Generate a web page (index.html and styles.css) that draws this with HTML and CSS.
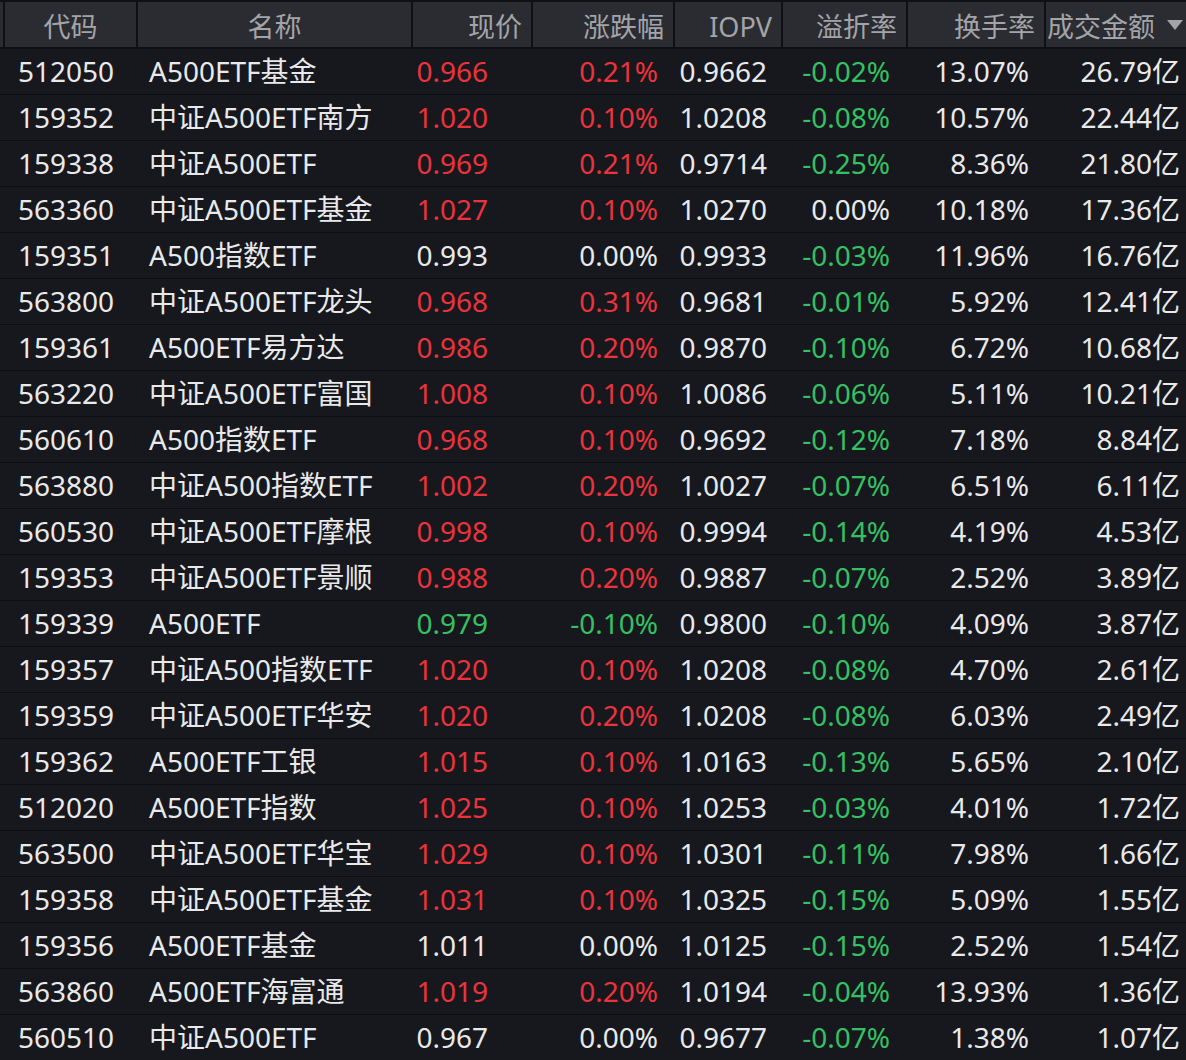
FILE: index.html
```html
<!DOCTYPE html>
<html lang="zh-CN">
<head>
<meta charset="utf-8">
<title>A500 ETF</title>
<link rel="stylesheet" href="styles.css">
</head>
<body>
<div class="board">
  <div class="row head">
    <div class="hc stub"></div>
    <div class="hc center">代码</div>
    <div class="hc center">名称</div>
    <div class="hc right">现价</div>
    <div class="hc right">涨跌幅</div>
    <div class="hc right">IOPV</div>
    <div class="hc right">溢折率</div>
    <div class="hc right">换手率</div>
    <div class="hc sort">成交金额<span class="tri"></span></div>
  </div>
  <div id="rows"></div>
</div>
<script src="app.js"></script>
</body>
</html>
```
FILE: styles.css
```css
* { box-sizing: border-box; }
html, body { margin: 0; padding: 0; background: #16181d; }
body {
  width: 1186px;
  height: 1060px;
  overflow: hidden;
  font-family: "Noto Sans", "Noto Sans CJK SC", sans-serif;
  font-size: 28px;
  color: #e9e9ea;
}
.board { display: flex; flex-direction: column; }
.row {
  display: grid;
  grid-template-columns: 3px 131px 273px 118px 140px 106px 123px 136px 140px;
  column-gap: 2px;
}
.head {
  height: 49px;
  background: #0f1013;
  padding-top: 2px;
  padding-bottom: 2px;
  font-size: 27px;
}
.hc {
  background: #2b2c32;
  color: #a3a4a8;
  display: flex;
  align-items: center;
  white-space: nowrap;
  line-height: 1;
  padding-top: 3px;
}
.hc.center { justify-content: center; }
.hc.right { justify-content: flex-end; padding-right: 9px; }
.hc.sort { padding-left: 1px; }
.tri {
  width: 0; height: 0;
  margin-left: 12px;
  margin-top: -3px;
  border-left: 8px solid transparent;
  border-right: 8px solid transparent;
  border-top: 10px solid #a3a4a8;
}
.data {
  height: 46px;
  padding-bottom: 2px;
  border-bottom: 1px solid #0c0d10;
  align-items: center;
  line-height: 1;
}
.data > div { white-space: nowrap; }
.c-code { padding-left: 13px; }
.c-name { padding-left: 11px; }
.c-price { text-align: right; padding-right: 43px; }
.c-chg { text-align: right; padding-right: 15px; }
.c-iopv { text-align: right; padding-right: 14px; }
.c-prem { text-align: right; padding-right: 16px; }
.c-turn { text-align: right; padding-right: 15px; }
.c-amt { text-align: right; padding-right: 6px; }
.up { color: #ea333c; }
.down { color: #35c063; }
.flat { color: #e9e9ea; }
```
FILE: app.js
```js
var data = [
["512050","A500ETF基金","0.966","0.21%","0.9662","-0.02%","13.07%","26.79亿"],
["159352","中证A500ETF南方","1.020","0.10%","1.0208","-0.08%","10.57%","22.44亿"],
["159338","中证A500ETF","0.969","0.21%","0.9714","-0.25%","8.36%","21.80亿"],
["563360","中证A500ETF基金","1.027","0.10%","1.0270","0.00%","10.18%","17.36亿"],
["159351","A500指数ETF","0.993","0.00%","0.9933","-0.03%","11.96%","16.76亿"],
["563800","中证A500ETF龙头","0.968","0.31%","0.9681","-0.01%","5.92%","12.41亿"],
["159361","A500ETF易方达","0.986","0.20%","0.9870","-0.10%","6.72%","10.68亿"],
["563220","中证A500ETF富国","1.008","0.10%","1.0086","-0.06%","5.11%","10.21亿"],
["560610","A500指数ETF","0.968","0.10%","0.9692","-0.12%","7.18%","8.84亿"],
["563880","中证A500指数ETF","1.002","0.20%","1.0027","-0.07%","6.51%","6.11亿"],
["560530","中证A500ETF摩根","0.998","0.10%","0.9994","-0.14%","4.19%","4.53亿"],
["159353","中证A500ETF景顺","0.988","0.20%","0.9887","-0.07%","2.52%","3.89亿"],
["159339","A500ETF","0.979","-0.10%","0.9800","-0.10%","4.09%","3.87亿"],
["159357","中证A500指数ETF","1.020","0.10%","1.0208","-0.08%","4.70%","2.61亿"],
["159359","中证A500ETF华安","1.020","0.20%","1.0208","-0.08%","6.03%","2.49亿"],
["159362","A500ETF工银","1.015","0.10%","1.0163","-0.13%","5.65%","2.10亿"],
["512020","A500ETF指数","1.025","0.10%","1.0253","-0.03%","4.01%","1.72亿"],
["563500","中证A500ETF华宝","1.029","0.10%","1.0301","-0.11%","7.98%","1.66亿"],
["159358","中证A500ETF基金","1.031","0.10%","1.0325","-0.15%","5.09%","1.55亿"],
["159356","A500ETF基金","1.011","0.00%","1.0125","-0.15%","2.52%","1.54亿"],
["563860","A500ETF海富通","1.019","0.20%","1.0194","-0.04%","13.93%","1.36亿"],
["560510","中证A500ETF","0.967","0.00%","0.9677","-0.07%","1.38%","1.07亿"]
];
function cls(v){ var n=parseFloat(v); return n>0?"up":(n<0?"down":"flat"); }
var html = "";
data.forEach(function(r){
  var pc = cls(r[3]);
  html += '<div class="row data">' +
    '<div></div>' +
    '<div class="c-code">'+r[0]+'</div>' +
    '<div class="c-name">'+r[1]+'</div>' +
    '<div class="c-price '+pc+'">'+r[2]+'</div>' +
    '<div class="c-chg '+pc+'">'+r[3]+'</div>' +
    '<div class="c-iopv">'+r[4]+'</div>' +
    '<div class="c-prem '+cls(r[5])+'">'+r[5]+'</div>' +
    '<div class="c-turn">'+r[6]+'</div>' +
    '<div class="c-amt">'+r[7]+'</div>' +
    '</div>';
});
document.getElementById("rows").innerHTML = html;
```
